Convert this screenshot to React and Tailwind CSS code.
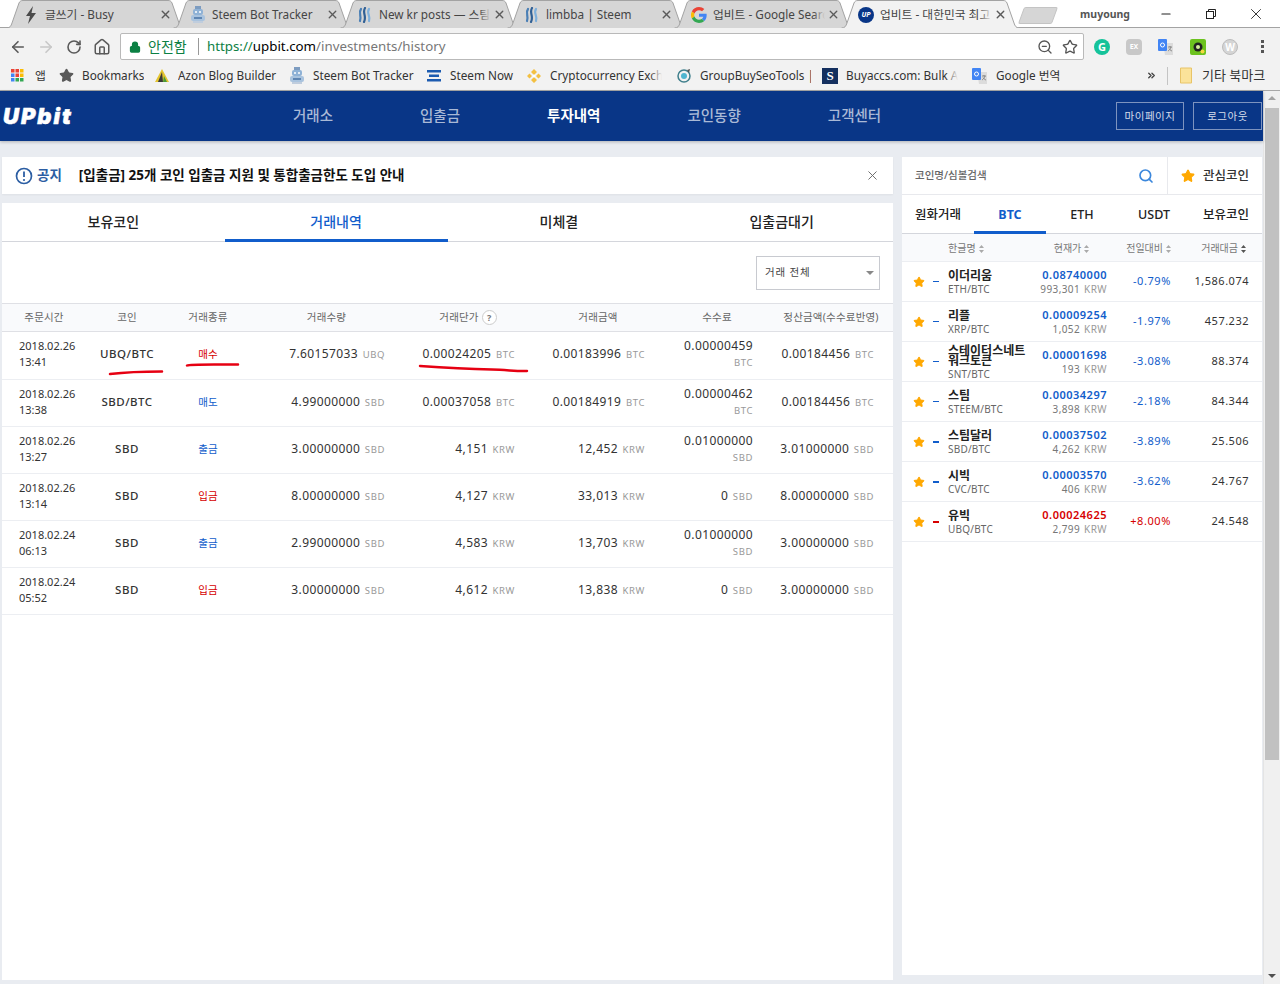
import React from "react";
import { ArrowLeft, ArrowRight, RotateCw, Home, Lock, Search, Star, X, ZoomOut, Minus, ChevronsRight } from "lucide-react";

const Bolt = () => (<svg width="16" height="18" viewBox="0 0 16 18"><path d="M10 0 3 10h4l-2 8 8-11H8.500z" fill="#4a4a4a" /></svg>);
const Robot = () => (
  <svg width="16" height="18" viewBox="0 0 16 18">
    <rect x="5" y="0" width="6" height="3" fill="#7d9cc0" />
    <rect x="3" y="3" width="10" height="6" rx="2" fill="#8fb2d6" />
    <circle cx="6" cy="6" r="1" fill="#fff" /><circle cx="10" cy="6" r="1" fill="#fff" />
    <rect x="1" y="9" width="14" height="6" rx="2" fill="#a9c3de" />
    <rect x="3" y="15" width="10" height="2" fill="#c0cddd" />
    <rect x="4" y="11" width="8" height="2" fill="#5f86b3" />
  </svg>
);
const SteemIcon = () => (
  <svg width="16" height="16" viewBox="0 0 16 16" fill="none" stroke="#4a7fb5" strokeWidth="2.200" strokeLinecap="round">
    <path d="M4 2C1 6 5 9 3 14" /><path d="M8 1C5 6 10 9 7 15" stroke="#2f5f95" /><path d="M12 2C9 6 14 9 12 14" stroke="#7fb0dc" />
  </svg>
);
const GoogleG = () => (
  <svg width="16" height="16" viewBox="0 0 48 48">
    <path fill="#EA4335" d="M24 9.500c3.500 0 6.700 1.300 9.100 3.400l6.800-6.800C35.800 2.400 30.200 0 24 0 14.600 0 6.500 5.400 2.600 13.200l7.900 6.100C12.400 13.700 17.700 9.500 24 9.500z" />
    <path fill="#4285F4" d="M47 24.500c0-1.600-.1-3.100-.4-4.500H24v9h12.900c-.6 3-2.200 5.500-4.700 7.200l7.600 5.900C44.300 37.900 47 31.800 47 24.500z" />
    <path fill="#FBBC05" d="M10.500 28.700A14.500 14.500 0 0 1 10.500 19.300l-7.900-6.100a24 24 0 0 0 0 21.600z" />
    <path fill="#34A853" d="M24 48c6.500 0 11.900-2.100 15.800-5.900l-7.600-5.900c-2.100 1.400-4.900 2.300-8.200 2.300-6.300 0-11.600-4.200-13.500-9.800l-7.900 6.100C6.500 42.600 14.600 48 24 48z" />
  </svg>
);
const UpIcon = () => (
  <div className="w-4 h-4 rounded-full bg-[#093687] flex items-center justify-center text-white text-[7px] font-bold italic leading-none">UP</div>
);
const GridIcon = () => (
  <svg width="13" height="13" viewBox="0 0 13 13">
    {[0, 1, 2].map((r) => [0, 1, 2].map((c) => (
      <rect key={r + "-" + c} x={c * 4.500} y={r * 4.500} width="3.500" height="3.500" fill={[["#ea4335", "#ea4335", "#fbbc05"], ["#4285f4", "#ea4335", "#fbbc05"], ["#4285f4", "#34a853", "#34a853"]][r][c]} />
    )))}
  </svg>
);
const Azon = () => (<svg width="16" height="16" viewBox="0 0 16 16"><path d="M8 1 15 14H1z" fill="#e5c530" /><path d="M8 4 4 14h5z" fill="#3a3a3a" /><path d="M10 8l3 6h-4z" fill="#4a9a3a" /></svg>);
const SteemNow = () => (<svg width="16" height="14" viewBox="0 0 16 14"><rect x="1" y="1" width="14" height="2.500" fill="#1c5bb0" /><rect x="3" y="5.500" width="10" height="2.500" fill="#1c5bb0" /><rect x="1" y="10" width="14" height="2.500" fill="#1c5bb0" /></svg>);
const Binance = () => (<svg width="16" height="16" viewBox="0 0 16 16" fill="#f3ba2f"><path d="M8 1 11 4 8 7 5 4zM3.500 5.500 6 8l-2.500 2.500L1 8zM12.500 5.500 15 8l-2.500 2.500L10 8zM8 9l3 3-3 3-3-3z" fillOpacity=".9" /><rect x="6.800" y="6.800" width="2.400" height="2.400" transform="rotate(45 8 8)" fill="#fff" /></svg>);
const Gbs = () => (<svg width="16" height="16" viewBox="0 0 16 16" fill="none"><circle cx="8" cy="8" r="6" stroke="#3f7f8c" strokeWidth="1.500" /><circle cx="8" cy="8" r="3" fill="#4fb5d0" /><path d="M11 2 14 1 13 5" fill="#555" /></svg>);
const SIcon = () => (<div className="w-4 h-4 bg-[#14305f] text-white text-[13px] font-bold leading-4 text-center [font-family:'Liberation_Serif',serif]">S</div>);
const GTrans = ({ size = 16 }) => (
  <svg width={size} height={size} viewBox="0 0 16 16">
    <path d="M5 4h10v12H7z" fill="#dcdcdc" /><rect x="0" y="0" width="9" height="12" rx="1" fill="#4285f4" />
    <circle cx="4.500" cy="6" r="2" fill="none" stroke="#fff" strokeWidth="1" /><path d="M10 8h4M12 7v1M13 8c-.5 2-2 3.500-3 4M11 9.500c.5 1 1.500 2 3 2.500" stroke="#777" strokeWidth=".8" fill="none" />
  </svg>
);
const FolderIcon = () => (<svg width="12" height="18" viewBox="0 0 12 18"><path d="M.5 1h11v15H.5z" fill="#fbe39a" stroke="#e8c468" strokeWidth="1" /></svg>);
const Grammarly = () => (<div className="w-4 h-4 rounded-full bg-[#15c39a] text-white text-[11px] font-bold flex items-center justify-center leading-none">G</div>);
const ExIcon = () => (<div className="w-4 h-4 rounded-sm bg-[#c8c8c8] text-white text-[7px] font-bold flex items-center justify-center leading-none">EX</div>);
const GreenExt = () => (<svg width="16" height="16" viewBox="0 0 16 16"><rect width="16" height="16" rx="2" fill="#6cc21f" /><circle cx="8" cy="8" r="4.500" fill="#222" /><circle cx="8" cy="8" r="2" fill="#d8f0a0" /><circle cx="12.500" cy="12.500" r="2" fill="#f5d840" /></svg>);
const WpIcon = () => (<div className="w-4 h-4 rounded-full bg-[#d5d5d5] border border-[#bcbcbc] text-white text-[10px] font-bold flex items-center justify-center leading-none">W</div>);

const tabs = [
  { icon: <Bolt />, label: "글쓰기 - Busy" },
  { icon: <Robot />, label: "Steem Bot Tracker" },
  { icon: <SteemIcon />, label: "New kr posts — 스팀" },
  { icon: <SteemIcon />, label: "limbba | Steem" },
  { icon: <GoogleG />, label: "업비트 - Google Search" },
  { icon: <UpIcon />, label: "업비트 - 대한민국 최고", active: true },
];

function Tab({ icon, label, active, first }) {
  return (
    <div className={"relative h-7 w-[179px] shrink-0 flex items-center pl-[17px] pt-[1px] " + (first ? "" : "-ml-[12px] ") + (active ? "z-10" : "")}>
      <svg className="absolute inset-0" width="179" height="28" viewBox="0 0 179 28">
        <path d="M0.500 28 C4 28 5 26 6 23 L13 3 C14 1 15 0.500 17 0.500 H162 C164 0.500 165 1 166 3 L173 23 C174 26 175 28 178.500 28" fill={active ? "#f2f2f2" : "#d6d6d6"} stroke="#a3a3a3" />
      </svg>
      <div className="relative w-4 h-4 flex items-center justify-center shrink-0">{icon}</div>
      <div className="relative ml-[6px] w-[112px] overflow-hidden whitespace-nowrap text-[11.750px] text-[#454545]">
        {label}
        <div className={"absolute right-0 top-0 bottom-0 w-3 bg-gradient-to-r from-transparent " + (active ? "to-[#f2f2f2]" : "to-[#d6d6d6]")} />
      </div>
      <X className="relative ml-[2px] shrink-0 text-[#5a5a5a]" size={13} strokeWidth={2.500} />
    </div>
  );
}

const bookmarks = [
  { icon: <Star size={15} fill="#5a5a5a" stroke="#5a5a5a" />, label: "Bookmarks", w: "w-[62px]", ml: "ml-[12px]" },
  { icon: <Azon />, label: "Azon Blog Builder", w: "w-[99px]", ml: "ml-[10px]" },
  { icon: <Robot />, label: "Steem Bot Tracker", w: "w-[101px]", ml: "ml-[12px]" },
  { icon: <SteemNow />, label: "Steem Now", w: "w-[65px]", ml: "ml-[12px]" },
  { icon: <Binance />, label: "Cryptocurrency Exchange", w: "w-[112px]", ml: "ml-[11px]" },
  { icon: <Gbs />, label: "GroupBuySeoTools |", w: "w-[111px]", ml: "ml-[14px]" },
  { icon: <SIcon />, label: "Buyaccs.com: Bulk Accounts", w: "w-[112px]", ml: "ml-[11px]" },
  { icon: <GTrans />, label: "Google 번역", w: "w-[70px]", ml: "ml-[14px]" },
];

function Browser() {
  return (
    <div className="[font-family:'Noto_Sans','Noto_Sans_CJK_KR',sans-serif]">
      <div className="relative h-[28px] bg-white flex items-end pl-[6px] border-b border-[#a3a3a3]">
        <div className="flex items-end -mb-px">
          {tabs.map((t, i) => <Tab key={i} {...t} first={i === 0} />)}
          <div className="ml-[1px] mb-[4px] w-[34px] h-[17px] bg-[#d6d6d6] border border-[#c4c4c4] rounded-[2px] -skew-x-[20deg]" />
        </div>
        <div className="ml-auto flex items-center h-full self-start pr-[2px]">
          <span className="text-[10.500px] font-bold text-[#555] [text-shadow:0_0_2px_#fff] mr-[13px] mt-[2px]">muyoung</span>
          <div className="w-[45px] flex justify-center"><Minus size={14} className="text-[#222]" /></div>
          <div className="w-[45px] flex justify-center">
            <svg width="12" height="12" viewBox="0 0 12 12" fill="none" stroke="#222"><rect x="1.500" y="3.500" width="7" height="7" /><path d="M3.500 3.500v-2h7v7h-2" /></svg>
          </div>
          <div className="w-[45px] flex justify-center"><X size={18} strokeWidth={1.200} className="text-[#222]" /></div>
        </div>
      </div>
      <div className="h-[34px] pt-[3px] bg-[#f2f2f2] flex items-center">
        <div className="flex items-center w-[120px] shrink-0 pl-[4px]">
          <div className="w-7 flex justify-center"><ArrowLeft size={18} strokeWidth={2.200} className="text-[#5a5a5a]" /></div>
          <div className="w-7 flex justify-center"><ArrowRight size={18} strokeWidth={2.200} className="text-[#c8c8c8]" /></div>
          <div className="w-7 flex justify-center"><RotateCw size={16} strokeWidth={2.400} className="text-[#5a5a5a]" /></div>
          <div className="w-7 flex justify-center"><Home size={18} strokeWidth={2} className="text-[#5a5a5a]" /></div>
        </div>
        <div className="w-[964px] shrink-0 h-[27px] bg-white border border-[#b9b9b9] rounded-[2px] flex items-center pl-[8px] pr-[5px]">
          <Lock size={12} fill="#0b8043" className="text-[#0b8043] shrink-0" strokeWidth={2.500} />
          <span className="ml-[7px] text-sm text-[#0b8043] w-[41px] whitespace-nowrap">안전함</span>
          <span className="ml-[9px] h-[17px] w-px bg-[#999]" />
          <span className="ml-[8px] text-[13.300px] whitespace-nowrap"><span className="text-[#0b8043]">https://</span><span className="text-black">upbit.com</span><span className="text-[#777]">/investments/history</span></span>
          <div className="ml-auto flex items-center gap-[9px]">
            <ZoomOut size={16} className="text-[#555]" />
            <Star size={16} className="text-[#555]" strokeWidth={2} />
          </div>
        </div>
        <div className="flex items-center pl-[2px]">
          {[<Grammarly key="a" />, <ExIcon key="b" />, <GTrans key="c" />, <GreenExt key="d" />, <WpIcon key="e" />].map((ic, i) => (
            <div key={i} className="w-8 flex justify-center">{ic}</div>
          ))}
          <div className="w-[32px] flex flex-col items-center gap-[2px]">
            <span className="w-[3px] h-[3px] bg-[#555]" /><span className="w-[3px] h-[3px] bg-[#555]" /><span className="w-[3px] h-[3px] bg-[#555]" />
          </div>
        </div>
      </div>
      <div className="h-[29px] pb-[1px] bg-[#f2f2f2] border-b border-[#a8a8a8] flex items-center pl-[11px] text-[11.750px] text-[#333]">
        <GridIcon />
        <span className="ml-[11px] w-[11px]">앱</span>
        {bookmarks.map((b, i) => (
          <div key={i} className={"flex items-center shrink-0 " + b.ml}>
            <div className="w-4 flex justify-center">{b.icon}</div>
            <div className={"relative ml-[8px] overflow-hidden whitespace-nowrap " + b.w}>
              {b.label}
              {b.w === "w-[112px]" && <div className="absolute right-0 top-0 bottom-0 w-3 bg-gradient-to-r from-transparent to-[#f2f2f2]" />}
            </div>
          </div>
        ))}
        <ChevronsRight size={11} strokeWidth={3} className="ml-[80px] text-[#444]" />
        <span className="ml-[10px] h-[18px] w-px bg-[#c4c4c4]" />
        <div className="ml-[12px]"><FolderIcon /></div>
        <span className="ml-[10px] text-[13px] whitespace-nowrap">기타 북마크</span>
      </div>
    </div>
  );
}

const rows = [
  { d: "2018.02.26", t: "13:41", coin: "UBQ/BTC", type: "매수", red: true, q: "7.60157033", qu: "UBQ", p: "0.00024205", pu: "BTC", a: "0.00183996", au: "BTC", f: "0.00000459", fu: "BTC", s: "0.00184456", su: "BTC", h: "h-[48px] pb-[3px]" },
  { d: "2018.02.26", t: "13:38", coin: "SBD/BTC", type: "매도", q: "4.99000000", qu: "SBD", p: "0.00037058", pu: "BTC", a: "0.00184919", au: "BTC", f: "0.00000462", fu: "BTC", s: "0.00184456", su: "BTC" },
  { d: "2018.02.26", t: "13:27", coin: "SBD", type: "출금", q: "3.00000000", qu: "SBD", p: "4,151", pu: "KRW", a: "12,452", au: "KRW", f: "0.01000000", fu: "SBD", s: "3.01000000", su: "SBD" },
  { d: "2018.02.26", t: "13:14", coin: "SBD", type: "입금", red: true, q: "8.00000000", qu: "SBD", p: "4,127", pu: "KRW", a: "33,013", au: "KRW", f: "0", fu: "SBD", inline: true, s: "8.00000000", su: "SBD" },
  { d: "2018.02.24", t: "06:13", coin: "SBD", type: "출금", q: "2.99000000", qu: "SBD", p: "4,583", pu: "KRW", a: "13,703", au: "KRW", f: "0.01000000", fu: "SBD", s: "3.00000000", su: "SBD" },
  { d: "2018.02.24", t: "05:52", coin: "SBD", type: "입금", red: true, q: "3.00000000", qu: "SBD", p: "4,612", pu: "KRW", a: "13,838", au: "KRW", f: "0", fu: "SBD", inline: true, s: "3.00000000", su: "SBD" },
];

const GRID = "grid grid-cols-[84px_82px_80px_157px_126px_134px_104px_124px]";

const Val = ({ n, u }) => (
  <span className="whitespace-nowrap text-xs tracking-[0.4px] text-[#333]">
    {n} <span className="ml-[1px] text-[9.500px] tracking-[0.6px] text-[#999]">{u}</span>
  </span>
);

function HistoryRow({ r, marked }) {
  return (
    <div className={"relative items-center border-b border-[#eceef2] " + GRID + " " + (r.h || "h-[47px] pb-[2px]")}>
      <div className="pl-[17px] text-[11px] leading-4 text-[#333]">
        <div>{r.d}</div>
        <div>{r.t}</div>
      </div>
      <div className="text-center text-[11.500px] font-medium tracking-[0.5px] text-[#333]">{r.coin}</div>
      <div className={"text-center pt-[2px] text-[10.500px] " + (r.red ? "text-[#d60000]" : "text-[#115dcb]")}>{r.type}</div>
      <div className="text-right pr-[20px] text-xs leading-none"><Val n={r.q} u={r.qu} /></div>
      <div className="text-right pr-[16px] text-xs leading-none"><Val n={r.p} u={r.pu} /></div>
      <div className="text-right pr-[20px] text-xs leading-none"><Val n={r.a} u={r.au} /></div>
      <div className="text-right pr-[16px] text-xs leading-none">
        {r.inline ? <Val n={r.f} u={r.fu} /> : (
          <div className="leading-[18px] pt-[2px]">
            <div className="text-xs tracking-[0.4px] text-[#333]">{r.f}</div>
            <div className="text-[9.500px] tracking-[0.6px] text-[#999]">{r.fu}</div>
          </div>
        )}
      </div>
      <div className="text-right pr-[19px] text-xs leading-none"><Val n={r.s} u={r.su} /></div>
      {marked && (
        <svg className="absolute left-0 top-0 pointer-events-none" width="891" height="48" viewBox="0 0 891 48" fill="none" stroke="#e60012" strokeWidth="2.500" strokeLinecap="round">
          <path d="M108 42C125 40 142 39.500 160 39.500" />
          <path d="M185 33.500C188 32 205 32.500 236 32.500" />
          <path d="M418 34C440 35.500 470 37 490 37.500C505 37.800 515 39.500 525 39" />
        </svg>
      )}
    </div>
  );
}

const coins = [
  { n: "이더리움", c: "ETH/BTC", p: "0.08740000", k: "993,301", ch: "-0.79%", v: "1,586.074" },
  { n: "리플", c: "XRP/BTC", p: "0.00009254", k: "1,052", ch: "-1.97%", v: "457.232" },
  { n: "스테이터스네트워크토큰", c: "SNT/BTC", p: "0.00001698", k: "193", ch: "-3.08%", v: "88.374" },
  { n: "스팀", c: "STEEM/BTC", p: "0.00034297", k: "3,898", ch: "-2.18%", v: "84.344" },
  { n: "스팀달러", c: "SBD/BTC", p: "0.00037502", k: "4,262", ch: "-3.89%", v: "25.506", thick: true },
  { n: "시빅", c: "CVC/BTC", p: "0.00003570", k: "406", ch: "-3.62%", v: "24.767", thick: true },
  { n: "유빅", c: "UBQ/BTC", p: "0.00024625", k: "2,799", ch: "+8.00%", v: "24.548", thick: true, up: true },
];

const CGRID = "grid grid-cols-[46px_90px_69px_64px_78px] pr-[13px]";

const SortIcon = ({ dark }) => (
  <svg className="inline-block ml-[3px]" width="5" height="8" viewBox="0 0 5 8" fill={dark ? "#555" : "#aaa"}><path d="M2.500 0 5 3H0zM2.500 8 0 5h5z" /></svg>
);

function CoinRow({ c }) {
  const color = c.up ? "text-[#d60000]" : "text-[#115dcb]";
  return (
    <div className={"h-[40px] items-center border-b border-[#eceef2] " + CGRID}>
      <div className="flex items-center pl-[11px]">
        <Star size={12} fill="#ffa800" stroke="#ffa800" />
        <span className={"ml-[8px] w-[6px] " + (c.up ? "bg-[#d60000] " : "bg-[#115dcb] ") + (c.thick ? "h-[2px]" : "h-px")} />
      </div>
      <div className="min-w-0">
        <div className="w-[80px] pt-[2px] text-xs font-bold leading-[10px] text-[#222] break-all">{c.n}</div>
        <div className="mt-[2px] text-[10px] leading-[12px] tracking-[0.2px] text-[#666]">{c.c}</div>
      </div>
      <div className="text-right">
        <div className={"text-[11px] font-semibold tracking-[0.5px] leading-[14px] " + color}>{c.p}</div>
        <div className="text-[10px] tracking-[0.4px] leading-[14px] text-[#777] whitespace-nowrap">{c.k} <span className="ml-[1px] text-[#999]">KRW</span></div>
      </div>
      <div className={"text-right text-[11px] tracking-[0.6px] " + color}>{c.ch}</div>
      <div className="text-right text-[11px] tracking-[0.5px] text-[#333]">{c.v}</div>
    </div>
  );
}

export default function App() {
  return (
    <div className="w-[1280px] h-[984px] overflow-hidden flex flex-col bg-white [font-family:'Noto_Sans','Noto_Sans_CJK_KR',sans-serif]">
      <Browser />
      <div className="flex-1 flex min-h-0">
        <div className="w-[1263px] flex flex-col bg-[#e9ecf1]">
          <header className="h-[50px] shrink-0 bg-[#093687] flex items-center shadow-[0_1px_3px_rgba(0,0,0,0.25)] relative z-10">
            <div className="w-[293px] pl-[3px] text-[22px] leading-none font-black italic text-white [font-family:'Inter',sans-serif] tracking-[2px] [-webkit-text-stroke:0.5px_white]">UPbit</div>
            <nav className="flex items-center gap-[87px] text-[14.500px] font-medium text-[#a9b9d6]">
              <span>거래소</span>
              <span>입출금</span>
              <span className="text-white font-bold">투자내역</span>
              <span>코인동향</span>
              <span>고객센터</span>
            </nav>
            <div className="ml-auto mr-px flex gap-[9px] text-[10.500px] tracking-[0.5px] text-[#d5dcea]">
              <div className="w-[68px] h-[28px] pt-[1px] border border-[#7d93bf] flex items-center justify-center">마이페이지</div>
              <div className="w-[69px] h-[28px] pt-[1px] border border-[#7d93bf] flex items-center justify-center">로그아웃</div>
            </div>
          </header>

          <main className="flex-1 flex gap-[9px] pl-[2px] pt-[16px] min-h-0">
            <div className="w-[891px] h-[823px] flex flex-col gap-[9px]">
              <div className="h-[37px] shrink-0 bg-white shadow-[0_1px_2px_rgba(0,0,0,0.05)] flex items-center pl-[13px] pr-[13px]">
                <svg width="18" height="18" viewBox="0 0 18 18" fill="none"><circle cx="9" cy="9" r="7.500" stroke="#2c5ea3" strokeWidth="1.700" /><path d="M9 4.500v5.500" stroke="#2c5ea3" strokeWidth="1.800" /><circle cx="9" cy="13" r="1.100" fill="#2c5ea3" /></svg>
                <span className="ml-[4px] text-[13.500px] font-bold text-[#2c5ea3]">공지</span>
                <span className="ml-[17px] text-[13.500px] font-bold text-[#111]">[입출금] 25개 코인 입출금 지원 및 통합출금한도 도입 안내</span>
                <X size={15} className="ml-auto text-[#666]" strokeWidth={1.500} />
              </div>
              <div className="flex-1 bg-white flex flex-col">
                <div className="grid grid-cols-4 h-[39px] border-b border-[#d4d6dc] shrink-0">
                  {["보유코인", "거래내역", "미체결", "입출금대기"].map((t, i) => (
                    <div key={t} className={"flex items-center justify-center text-sm font-medium " + (i === 1 ? "text-[#115dcb] font-bold pt-[2px] border-b-[3px] border-[#115dcb] -mb-px" : "text-[#222]")}>{t}</div>
                  ))}
                </div>
                <div className="h-[61px] shrink-0 flex items-center justify-end pr-[13px]">
                  <div className="w-[124px] h-[34px] border border-[#c8cad0] flex items-center pl-[8px] pr-[5px] text-[10.500px] text-[#444] tracking-[0.8px]">
                    거래 전체
                    <span className="ml-auto w-0 h-0 border-x-[4px] border-x-transparent border-t-[4px] border-t-[#888]" />
                  </div>
                </div>
                <div className={"h-[29px] shrink-0 items-center bg-[#f9fafc] border-y border-[#dfe0e5] text-[10.500px] tracking-[0.2px] text-[#666] text-center " + GRID}>
                  <div>주문시간</div>
                  <div>코인</div>
                  <div>거래종류</div>
                  <div>거래수량</div>
                  <div className="flex items-center justify-center">거래단가
                    <span className="ml-[3px] w-[15px] h-[15px] rounded-full border border-[#ccc] bg-white text-[9px] font-bold leading-none text-[#777] flex items-center justify-center">?</span>
                  </div>
                  <div>거래금액</div>
                  <div>수수료</div>
                  <div className="whitespace-nowrap">정산금액(수수료반영)</div>
                </div>
                {rows.map((r, i) => <HistoryRow key={i} r={r} marked={i === 0} />)}
              </div>
            </div>

            <aside className="w-[360px] h-[818px] bg-white flex flex-col">
              <div className="h-[38px] shrink-0 flex items-center border-b border-[#e8e9ed]">
                <div className="flex-1 flex items-center pl-[13px] pr-[13px] text-[10.500px] font-medium text-[#666]">
                  코인명/심볼검색
                  <Search size={16} className="ml-auto text-[#3b87dc]" strokeWidth={2.500} />
                </div>
                <div className="w-[95px] h-full pt-[1px] border-l border-[#e8e9ed] flex items-center pl-[13px] text-[12.500px] font-medium text-[#333]">
                  <Star size={14} fill="#ffa800" stroke="#ffa800" />
                  <span className="ml-[8px]">관심코인</span>
                </div>
              </div>
              <div className="grid grid-cols-5 h-[39px] shrink-0 border-b border-[#d4d6dc] text-[12.500px] font-medium text-[#222]">
                {["원화거래", "BTC", "ETH", "USDT", "보유코인"].map((t, i) => (
                  <div key={t} className={"flex items-center justify-center " + (i === 1 ? "text-[#115dcb] font-bold pt-[4px] border-b-[3px] border-[#115dcb] -mb-px" : "pt-[2px]")}>{t}</div>
                ))}
              </div>
              <div className={"h-[28px] pt-[1px] shrink-0 items-center bg-[#f9fafc] border-b border-[#eceef2] text-[10px] text-[#777] " + CGRID}>
                <div />
                <div className="whitespace-nowrap">한글명<SortIcon /></div>
                <div className="text-center pr-[2px] whitespace-nowrap">현재가<SortIcon /></div>
                <div className="text-right whitespace-nowrap">전일대비<SortIcon /></div>
                <div className="text-right pr-[3px] whitespace-nowrap">거래대금<SortIcon dark /></div>
              </div>
              {coins.map((c) => <CoinRow key={c.c} c={c} />)}
            </aside>
          </main>
        </div>
        <div className="w-[17px] shrink-0 bg-[#f0f0f0] flex flex-col items-center justify-between border-l border-[#e4e4e4]">
          <div className="w-full flex flex-col items-center">
            <span className="mt-[5px] w-0 h-0 border-x-[4px] border-x-transparent border-b-[4px] border-b-[#a3a3a3]" />
            <div className="mt-[8px] w-[14px] h-[652px] bg-[#c1c1c1]" />
          </div>
          <span className="mb-[6px] w-0 h-0 border-x-[4px] border-x-transparent border-t-[4px] border-t-[#505050]" />
        </div>
      </div>
    </div>
  );
}
